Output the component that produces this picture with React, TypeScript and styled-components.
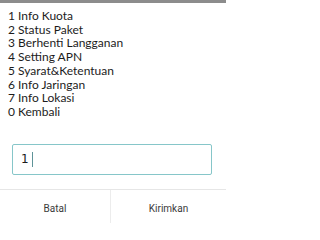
import styled, { createGlobalStyle } from "styled-components";

const Global = createGlobalStyle`
  html, body {
    margin: 0;
    padding: 0;
    background: #ffffff;
  }
`;

const Dialog = styled.div`
  width: 226px;
  height: 223px;
  box-sizing: border-box;
  border-top: 3px solid #8c8c8c;
  background: #ffffff;
  display: flex;
  flex-direction: column;
  overflow: hidden;
`;

const Menu = styled.div`
  padding: 6px 0 0 8px;
  font-family: Lato, "Liberation Sans", sans-serif;
  font-size: 12px;
  line-height: 13.7px;
  color: #1c1c1c;
`;

const Line = styled.div`
  white-space: nowrap;
`;

const InputBox = styled.div`
  margin: 25px 14px 0 12px;
  height: 31px;
  box-sizing: border-box;
  border: 1.5px solid #86c6c9;
  border-radius: 2px;
  display: flex;
  align-items: center;
  padding-left: 8px;
  font-family: "DejaVu Sans", sans-serif;
  font-size: 12px;
  color: #1c1c1c;
`;

const Caret = styled.span`
  display: inline-block;
  width: 1.5px;
  height: 15px;
  margin-left: 3px;
  background: #5e9398;
`;

const Actions = styled.div`
  margin-top: 14px;
  border-top: 1px solid #e6e6e6;
  display: grid;
  grid-template-columns: 111px 1fr;
  flex: 1;
`;

const Action = styled.div<{ $divider?: boolean }>`
  display: flex;
  justify-content: center;
  padding-top: 12px;
  font-family: Roboto, "Liberation Sans", sans-serif;
  font-size: 10px;
  line-height: 13px;
  color: #3a3a3a;
  border-right: ${(p) => (p.$divider ? "1px solid #ececec" : "none")};
`;

const ITEMS = [
  "1 Info Kuota",
  "2 Status Paket",
  "3 Berhenti Langganan",
  "4 Setting APN",
  "5 Syarat&Ketentuan",
  "6 Info Jaringan",
  "7 Info Lokasi",
  "0 Kembali",
];

export default function App() {
  return (
    <>
      <Global />
      <Dialog>
        <Menu>
          {ITEMS.map((t) => (
            <Line key={t}>{t}</Line>
          ))}
        </Menu>
        <InputBox>
          1<Caret />
        </InputBox>
        <Actions>
          <Action $divider>Batal</Action>
          <Action>Kirimkan</Action>
        </Actions>
      </Dialog>
    </>
  );
}
